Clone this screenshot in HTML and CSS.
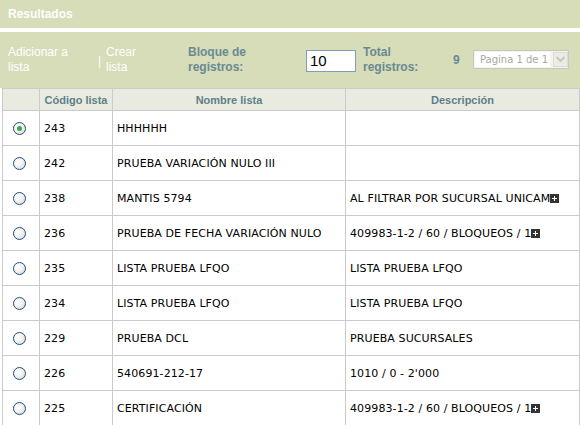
FILE: index.html
```html
<!DOCTYPE html>
<html>
<head>
<meta charset="utf-8">
<link rel="stylesheet" href="styles.css">
</head>
<body>
<div class="titlebar">Resultados</div>
<div class="toolbar">
  <span class="link l1">Adicionar a<br>lista</span>
  <span class="sep">|</span>
  <span class="link l2">Crear<br>lista</span>
  <span class="label l3">Bloque de<br>registros:</span>
  <span class="input">10</span>
  <span class="label l4">Total<br>registros:</span>
  <span class="count">9</span>
  <span class="select"><span class="seltext">Pagina 1 de 1</span><span class="selbtn"><svg width="11" height="8" viewBox="0 0 11 8"><path d="M1.5 2 L5.5 6 L9.5 2" fill="none" stroke="#c8c8c0" stroke-width="2"/></svg></span></span>
</div>
<table class="grid">
  <thead>
    <tr><th class="c0"></th><th class="c1">Código lista</th><th class="c2">Nombre lista</th><th class="c3">Descripción</th></tr>
  </thead>
  <tbody>
    <tr><td class="c0"><span class="radio on"></span></td><td>243</td><td>HHHHHH</td><td></td></tr>
    <tr><td class="c0"><span class="radio"></span></td><td>242</td><td>PRUEBA VARIACIÓN NULO III</td><td></td></tr>
    <tr><td class="c0"><span class="radio"></span></td><td>238</td><td>MANTIS 5794</td><td>AL FILTRAR POR SUCURSAL UNICAM<span class="plus"></span></td></tr>
    <tr><td class="c0"><span class="radio"></span></td><td>236</td><td>PRUEBA DE FECHA VARIACIÓN NULO</td><td>409983-1-2 / 60 / BLOQUEOS / 1<span class="plus"></span></td></tr>
    <tr><td class="c0"><span class="radio"></span></td><td>235</td><td>LISTA PRUEBA LFQO</td><td>LISTA PRUEBA LFQO</td></tr>
    <tr><td class="c0"><span class="radio"></span></td><td>234</td><td>LISTA PRUEBA LFQO</td><td>LISTA PRUEBA LFQO</td></tr>
    <tr><td class="c0"><span class="radio"></span></td><td>229</td><td>PRUEBA DCL</td><td>PRUEBA SUCURSALES</td></tr>
    <tr><td class="c0"><span class="radio"></span></td><td>226</td><td>540691-212-17</td><td>1010 / 0 - 2'000</td></tr>
    <tr><td class="c0"><span class="radio"></span></td><td>225</td><td>CERTIFICACIÓN</td><td>409983-1-2 / 60 / BLOQUEOS / 1<span class="plus"></span></td></tr>
  </tbody>
</table>
</body>
</html>
```
FILE: styles.css
```css
html, body { margin: 0; padding: 0; background: #fff; }
body { font-family: "Liberation Sans", Arial, sans-serif; overflow: hidden; }

.titlebar {
  height: 28px;
  line-height: 28px;
  background: #d7dcb9;
  color: #fff;
  font-size: 12px;
  font-weight: bold;
  padding-left: 8px;
}

.toolbar {
  margin-top: 4px;
  height: 56px;
  background: #d7dcb9;
  display: flex;
  align-items: center;
  font-size: 12px;
  line-height: 15px;
}
.link { color: #fff; }
.l1 { margin-left: 8px; width: 90px; }
.sep { color: #fff; margin-top: 2px; width: 8px; }
.l2 { width: 82px; }
.label { color: #6a8a93; font-weight: bold; }
.l3 { width: 118px; }
.input {
  box-sizing: border-box;
  width: 50px;
  height: 22px;
  border: 1px solid #7f9db9;
  background: #fff;
  color: #000;
  font-size: 15px;
  line-height: 20px;
  padding-left: 3px;
  margin-right: 7px;
  margin-top: 1px;
}
.l4 { width: 90px; }
.count { color: #6a8a93; font-weight: bold; width: 20px; }
.select {
  box-sizing: border-box;
  width: 96px;
  height: 19px;
  border: 1px solid #c8c8c0;
  background: #f4f4ec;
  display: flex;
  align-items: center;
  margin-top: -2px;
}
.seltext {
  font-family: "DejaVu Sans", Verdana, sans-serif;
  font-size: 10px;
  color: #a8a8a0;
  background: #fff;
  height: 15px;
  line-height: 15px;
  padding-left: 5px;
  width: 72px;
  margin-left: 1px;
}
.selbtn {
  width: 15px;
  height: 15px;
  margin-left: 3px;
  background: #ecece4;
  border: 1px solid #dcdcd4;
  box-sizing: border-box;
  display: flex;
  align-items: center;
  justify-content: center;
}

.grid {
  margin-left: 2px;
  width: 578px;
  border-collapse: collapse;
  table-layout: fixed;
}
.grid th, .grid td { border: 1px solid #cbcbcb; padding: 0; }
.grid th {
  background: #e9ebe1;
  height: 21px;
  font-family: "Liberation Sans", Tahoma, sans-serif;
  font-size: 11px;
  font-weight: bold;
  color: #5f7f88;
  text-align: center;
}
.c0 { width: 36px; }
.c1 { width: 72px; }
.c2 { width: 232px; }
.grid td {
  height: 34px;
  font-family: "DejaVu Sans", Verdana, sans-serif;
  font-size: 11px;
  letter-spacing: 0.1px;
  color: #000;
  padding-left: 4px;
  white-space: nowrap;
  overflow: hidden;
}
.grid td.c0 { padding-left: 0; text-align: center; }

.radio {
  display: inline-block;
  width: 11px;
  height: 11px;
  border: 1px solid #1e4f82;
  border-radius: 50%;
  background: radial-gradient(circle at 35% 35%, #ffffff 0%, #f4f4f0 40%, #d4d4cc 100%);
  vertical-align: middle;
  position: relative;
  margin-left: -3px;
}
.radio.on::after {
  content: "";
  position: absolute;
  left: 3px; top: 3px;
  width: 5px; height: 5px;
  border-radius: 50%;
  background: #3aa84a;
}

.plus {
  display: inline-block;
  width: 9px;
  height: 9px;
  background: #333 ;
  vertical-align: -1px;
  position: relative;
}
.plus::before, .plus::after {
  content: "";
  position: absolute;
  background: #fff;
}
.plus::before { left: 2px; top: 4px; width: 5px; height: 1px; }
.plus::after { left: 4px; top: 2px; width: 1px; height: 5px; }
```
